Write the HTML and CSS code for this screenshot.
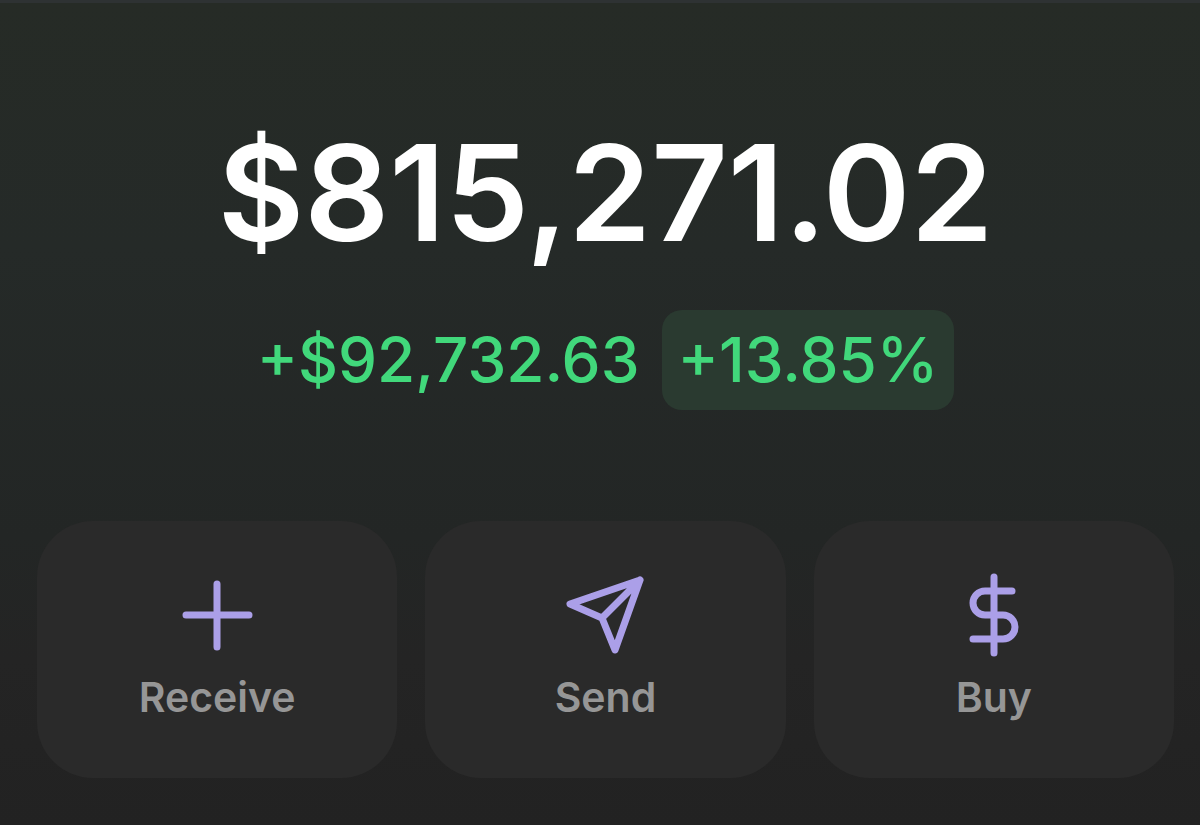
FILE: index.html
```html
<!DOCTYPE html>
<html lang="en">
<head>
  <meta charset="UTF-8" />
  <meta name="viewport" content="width=device-width, initial-scale=1" />
  <title>Wallet</title>
  <link rel="stylesheet" href="styles.css">
</head>
<body>
  <main class="wallet">
    <h1 class="balance">$815,271.02</h1>

    <div class="change">
      <span class="change-amount">+$92,732.63</span>
      <span class="change-percent">+13.85%</span>
    </div>

    <div class="actions">
      <button class="action" type="button">
        <svg class="icon" viewBox="0 0 96 96" aria-hidden="true">
          <path d="M48 18V81M17 49H80" />
        </svg>
        <span>Receive</span>
      </button>
      <button class="action" type="button">
        <svg class="icon" viewBox="0 0 96 96" aria-hidden="true">
          <path d="M83 14L13 38L45 52L58 84ZM83 14L45 52" />
        </svg>
        <span>Send</span>
      </button>
      <button class="action" type="button">
        <svg class="icon" viewBox="0 0 96 96" aria-hidden="true">
          <path d="M48 11V87M66 25H39A12 12 0 0 0 39 49H57A12 12 0 0 1 57 73H27" />
        </svg>
        <span>Buy</span>
      </button>
    </div>
  </main>
</body>
</html>
```
FILE: styles.css
```css
* {
  box-sizing: border-box;
}

body {
  margin: 0;
  min-height: 100vh;
  border-top: 3px solid #2e3233;
  background: linear-gradient(#262b26 0%, #252a28 30%, #232625 65%, #242424 80%, #222222 100%);
  color: #fff;
  font-family: Inter, "Liberation Sans", sans-serif;
}

.wallet {
  padding: 110px 26px 46px 37px;
}

.balance {
  margin: 0;
  font-size: 133px;
  font-weight: 600;
  line-height: 160px;
  text-align: center;
}

.change {
  display: flex;
  justify-content: center;
  align-items: center;
  gap: 22px;
  margin-top: 37px;
  color: #41d87b;
  font-size: 62px;
  font-weight: 500;
  line-height: 100px;
}

.change-percent {
  padding: 0 16px;
  border-radius: 20px;
  background: #2a3a30;
}

.actions {
  display: grid;
  grid-template-columns: repeat(3, 1fr);
  gap: 28px;
  margin-top: 111px;
}

.action {
  display: flex;
  flex-direction: column;
  align-items: center;
  padding: 45px 16px 56px;
  border: none;
  border-radius: 56px;
  background: #2a2a2a;
  color: #969696;
  font-family: inherit;
  font-size: 41px;
  font-weight: 600;
  line-height: 50px;
  cursor: pointer;
}

.icon {
  width: 96px;
  height: 96px;
  margin-bottom: 10px;
  fill: none;
  stroke: #ab9fe8;
  stroke-width: 7;
  stroke-linecap: round;
  stroke-linejoin: round;
}
```
